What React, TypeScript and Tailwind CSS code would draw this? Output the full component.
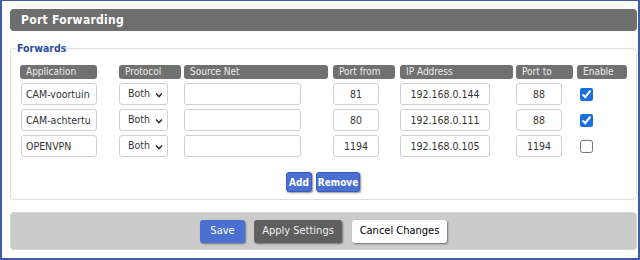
import React from 'react';

const font = { fontFamily: '"DejaVu Sans Condensed", "Liberation Sans Narrow", "Liberation Sans", Arial, sans-serif' };

interface Forward {
    app: string;
    from: string;
    ip: string;
    to: string;
    enabled: boolean;
}

const forwards: Forward[] = [
    { app: 'CAM-voortuin', from: '81', ip: '192.168.0.144', to: '88', enabled: true },
    { app: 'CAM-achtertu', from: '80', ip: '192.168.0.111', to: '88', enabled: true },
    { app: 'OPENVPN', from: '1194', ip: '192.168.0.105', to: '1194', enabled: false },
];

const HeadCell: React.FC<{ label: string; width: string }> = ({ label, width }) => (
    <div className={`${width} h-[14px] rounded-[3px] bg-[#717171] text-[#ececec] text-[10px] leading-[14px] pl-[6px] whitespace-nowrap overflow-hidden`}>
        {label}
    </div>
);

const Field: React.FC<{ value: string; width: string; center?: boolean }> = ({ value, width, center }) => (
    <div className={`${width} h-[22px] rounded-[3px] border border-[#d0d0d0] bg-white text-[10.5px] leading-[20px] text-[#333] px-[4px] whitespace-nowrap overflow-hidden ${center ? 'text-center' : ''}`}>
        {value}
    </div>
);

const ProtocolSelect: React.FC = () => (
    <div className="w-[49px] h-[22px] rounded-[3px] border border-[#d0d0d0] bg-white flex items-center pl-[8px] gap-[5px] text-[10.5px] text-[#333]">
        <span>Both</span>
        <svg width="8" height="6" viewBox="0 0 8 6" className="mt-[1px]">
            <polyline points="1,1.5 4,4.5 7,1.5" fill="none" stroke="#333" strokeWidth="1.6" />
        </svg>
    </div>
);

export default function App() {
    return (
        <div style={font} className="w-[640px] h-[260px] bg-white border-x-2 border-b-2 border-t border-[#3d5da6] pl-2 pr-[1px] pt-2">
            <div className="h-[22px] rounded-[4px] bg-[#6e6e6e] pl-[11px] text-white font-bold text-[12px] leading-[22px] tracking-[0.3px]">
                Port Forwarding
            </div>

            {/* fieldset-like group box */}
            <div className="mt-[17px] border border-[#dedede] rounded-[4px] pl-[9px] pb-[7px]">
                <div className="-mt-[8px] -ml-[4px] w-fit bg-white px-[1px] text-[10.5px] leading-[14px] font-bold text-[#2c4f9e]">Forwards</div>

                <div className="mt-[10px] grid grid-cols-[99px_65px_149px_67px_116px_61px_50px] gap-y-[4px]">
                    <HeadCell label="Application" width="w-[77px]" />
                    <HeadCell label="Protocol" width="w-[62px]" />
                    <HeadCell label="Source Net" width="w-[144px]" />
                    <HeadCell label="Port from" width="w-[62px]" />
                    <HeadCell label="IP Address" width="w-[113px]" />
                    <HeadCell label="Port to" width="w-[57px]" />
                    <HeadCell label="Enable" width="w-[50px]" />

                    {forwards.map((f) => (
                        <React.Fragment key={f.app}>
                            <div className="pl-[1px]"><Field value={f.app} width="w-[76px]" /></div>
                            <ProtocolSelect />
                            <Field value="" width="w-[117px]" />
                            <Field value={f.from} width="w-[46px]" center />
                            <Field value={f.ip} width="w-[90px]" center />
                            <Field value={f.to} width="w-[46px]" center />
                            <div className="flex items-center pl-[3px]">
                                <input type="checkbox" defaultChecked={f.enabled} className="w-[13px] h-[13px] m-0 accent-[#1a6fe3]" />
                            </div>
                        </React.Fragment>
                    ))}
                </div>

                <div className="mt-[15px] flex justify-center gap-[4px] pr-[10px]">
                    <button className="w-[26px] h-[20px] rounded-[3px] bg-[#4a70d2] border border-[#3a5cb8] text-white font-bold text-[10px] shadow-[1px_1px_2px_rgba(0,0,0,0.45)]">Add</button>
                    <button className="w-[44px] h-[20px] rounded-[3px] bg-[#4a70d2] border border-[#3a5cb8] text-white font-bold text-[10px] shadow-[1px_1px_2px_rgba(0,0,0,0.45)]">Remove</button>
                </div>
            </div>

            <div className="mt-[12px] h-[38px] rounded-[4px] bg-[#cbcbcb] border border-[#d6d6d6] flex items-center justify-center gap-[9px]">
                <button className="w-[45px] h-[23px] rounded-[3px] bg-[#4a70d2] text-white text-[11px] shadow-[1px_1px_2px_rgba(0,0,0,0.45)]">Save</button>
                <button className="w-[88px] h-[23px] rounded-[3px] bg-[#5f5f5f] text-[#f0f0f0] text-[11px] shadow-[1px_1px_2px_rgba(0,0,0,0.45)]">Apply Settings</button>
                <button className="w-[95px] h-[23px] ml-[1px] rounded-[3px] bg-white text-black text-[11px] shadow-[1px_1px_2px_rgba(0,0,0,0.45)]">Cancel Changes</button>
            </div>
        </div>
    );
}
